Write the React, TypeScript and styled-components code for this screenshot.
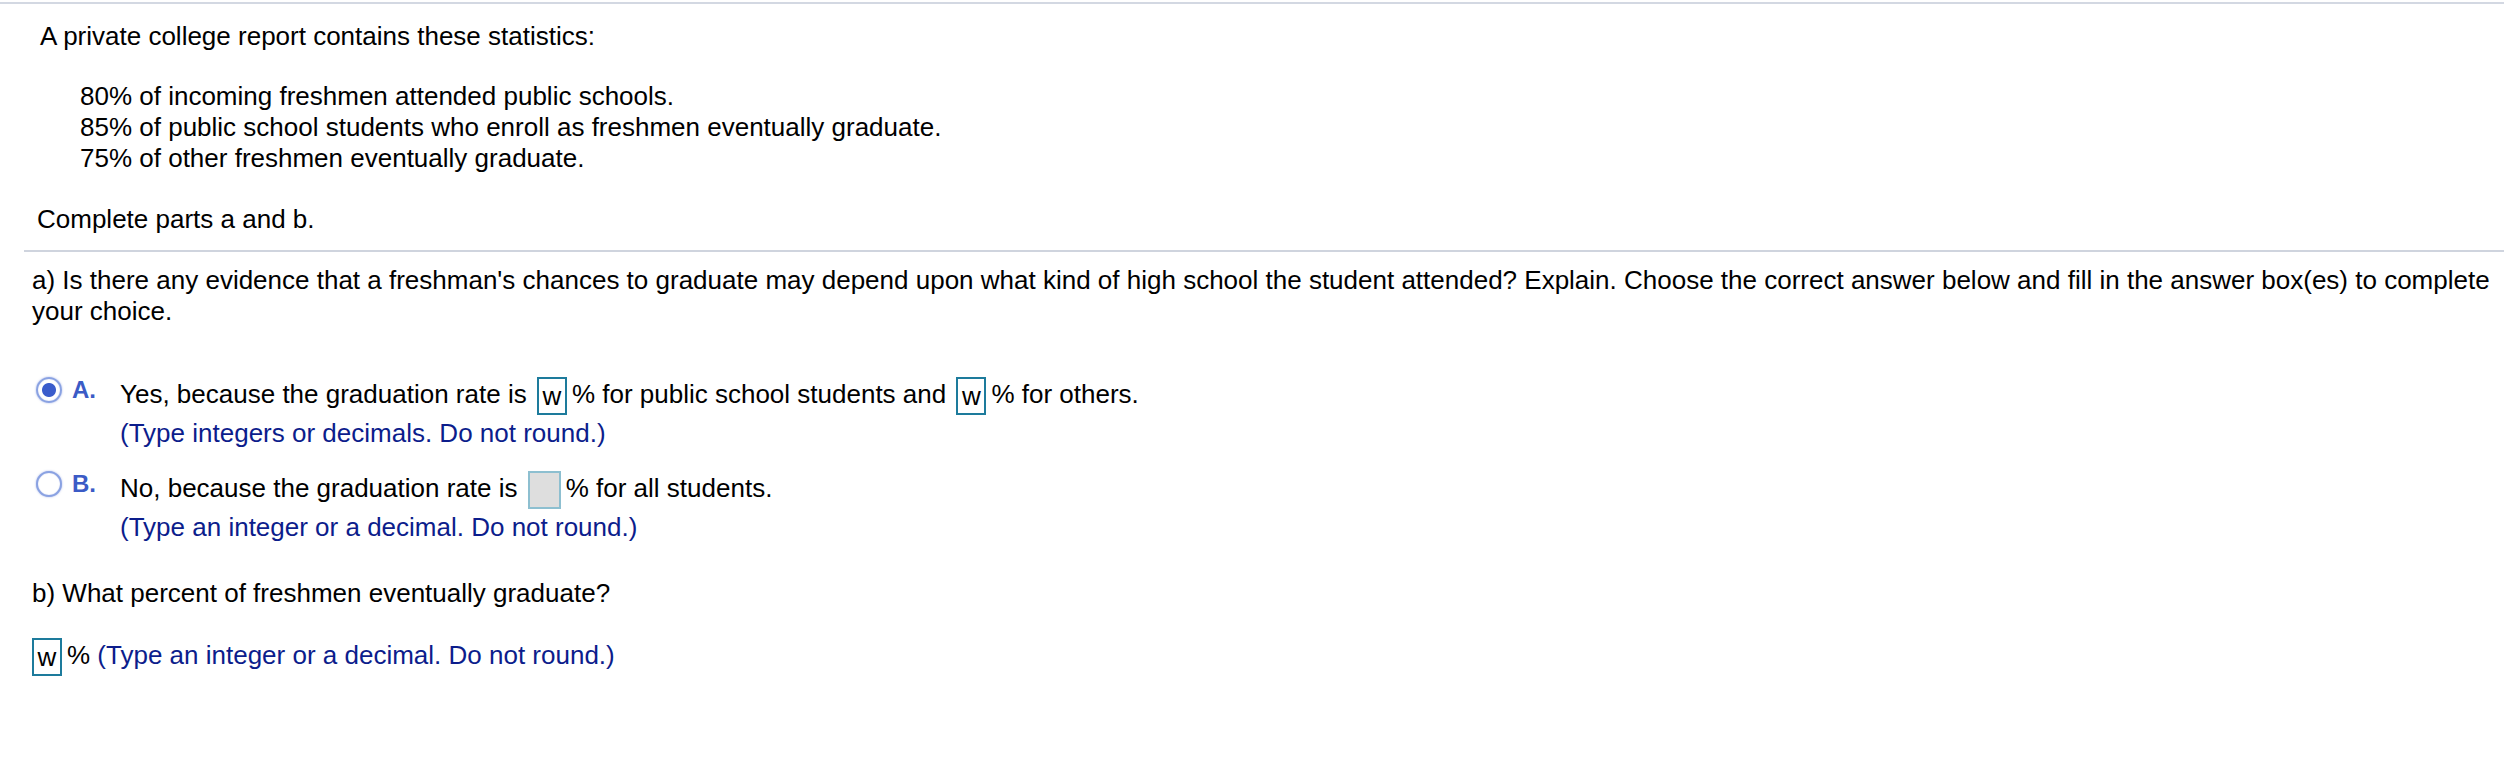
import React from "react"
import styled, { createGlobalStyle } from "styled-components"

const GlobalStyle = createGlobalStyle`
  html, body {
    margin: 0;
    padding: 0;
    background: #ffffff;
  }
  body {
    font-family: "Liberation Sans", Arial, Helvetica, sans-serif;
    font-size: 26px;
    line-height: 31px;
    color: #000000;
  }
`

const Page = styled.div`
  padding-top: 2px;
  width: 2504px;
  box-sizing: border-box;
`

const TopRule = styled.div`
  height: 2px;
  background-color: #d3d8e2;
`

const Text = styled.p<{ $indent: number; $top: number }>`
  margin: ${(p) => p.$top}px 0 0 0;
  padding-left: ${(p) => p.$indent}px;
`

const Stats = styled.div`
  margin-top: 29px;
  padding-left: 80px;
`

const Divider = styled.div`
  margin: 15px 0 0 24px;
  height: 2px;
  background-color: #cfd4de;
`

const Option = styled.div<{ $top: number }>`
  display: flex;
  align-items: flex-start;
  margin-top: ${(p) => p.$top}px;
  padding-left: 36px;
`

const Radio = styled.span<{ $checked?: boolean }>`
  flex-shrink: 0;
  width: 26px;
  height: 26px;
  box-sizing: border-box;
  border-radius: 50%;
  border: 2px solid #8aa2e2;
  box-shadow: 0 0 2px rgba(70, 100, 210, 0.5), inset 0 0 1px rgba(70, 100, 210, 0.45);
  background: ${(p) =>
    p.$checked
      ? "radial-gradient(circle, #3a5ccc 0 6.5px, #ffffff 7.5px)"
      : "#ffffff"};
`

const Letter = styled.span`
  flex-shrink: 0;
  width: 48px;
  margin-left: 10px;
  font-size: 24px;
  line-height: 26px;
  font-weight: bold;
  color: #3b5bc6;
`

const Choice = styled.div`
  display: flex;
  flex-direction: column;
`

const Statement = styled.div``

const Hint = styled.span<{ $block?: boolean }>`
  display: ${(p) => (p.$block ? "block" : "inline")};
  margin-top: ${(p) => (p.$block ? "3px" : "0")};
  color: #0c1d8c;
`

const AnswerBox = styled.span<{ $empty?: boolean }>`
  display: inline-flex;
  align-items: center;
  justify-content: center;
  box-sizing: border-box;
  width: ${(p) => (p.$empty ? 33 : 30)}px;
  height: 38px;
  margin: 0 5px 0 3px;
  vertical-align: middle;
  line-height: 1;
  border: 2px solid ${(p) => (p.$empty ? "#8dbfd0" : "#1d7b9c")};
  background-color: ${(p) => (p.$empty ? "#dedede" : "#ffffff")};
`

const AnswerRow = styled.div`
  margin-top: 29px;
  padding-left: 32px;
`

const LeadBox = styled(AnswerBox)`
  margin-left: 0;
`

export default function App() {
  return (
    <>
      <GlobalStyle />
      <Page>
        <TopRule />
        <Text $indent={40} $top={17}>
          A private college report contains these statistics:
        </Text>
        <Stats>
          <div>80% of incoming freshmen attended public schools.</div>
          <div>85% of public school students who enroll as freshmen eventually graduate.</div>
          <div>75% of other freshmen eventually graduate.</div>
        </Stats>
        <Text $indent={37} $top={30}>
          Complete parts a and b.
        </Text>
        <Divider />
        <Text $indent={32} $top={13}>
          a) Is there any evidence that a freshman's chances to graduate may depend upon
          what kind of high school the student attended? Explain. Choose the correct answer
          below and fill in the answer box(es) to complete your choice.
        </Text>

        <Option $top={50}>
          <Radio $checked />
          <Letter>A.</Letter>
          <Choice>
            <Statement>
              Yes, because the graduation rate is <AnswerBox>w</AnswerBox>% for public school
              students and <AnswerBox>w</AnswerBox>% for others.
            </Statement>
            <Hint $block>(Type integers or decimals. Do not round.)</Hint>
          </Choice>
        </Option>

        <Option $top={22}>
          <Radio />
          <Letter>B.</Letter>
          <Choice>
            <Statement>
              No, because the graduation rate is <AnswerBox $empty />% for all students.
            </Statement>
            <Hint $block>(Type an integer or a decimal. Do not round.)</Hint>
          </Choice>
        </Option>

        <Text $indent={32} $top={35}>
          b) What percent of freshmen eventually graduate?
        </Text>
        <AnswerRow>
          <LeadBox>w</LeadBox>% <Hint>(Type an integer or a decimal. Do not round.)</Hint>
        </AnswerRow>
      </Page>
    </>
  )
}
